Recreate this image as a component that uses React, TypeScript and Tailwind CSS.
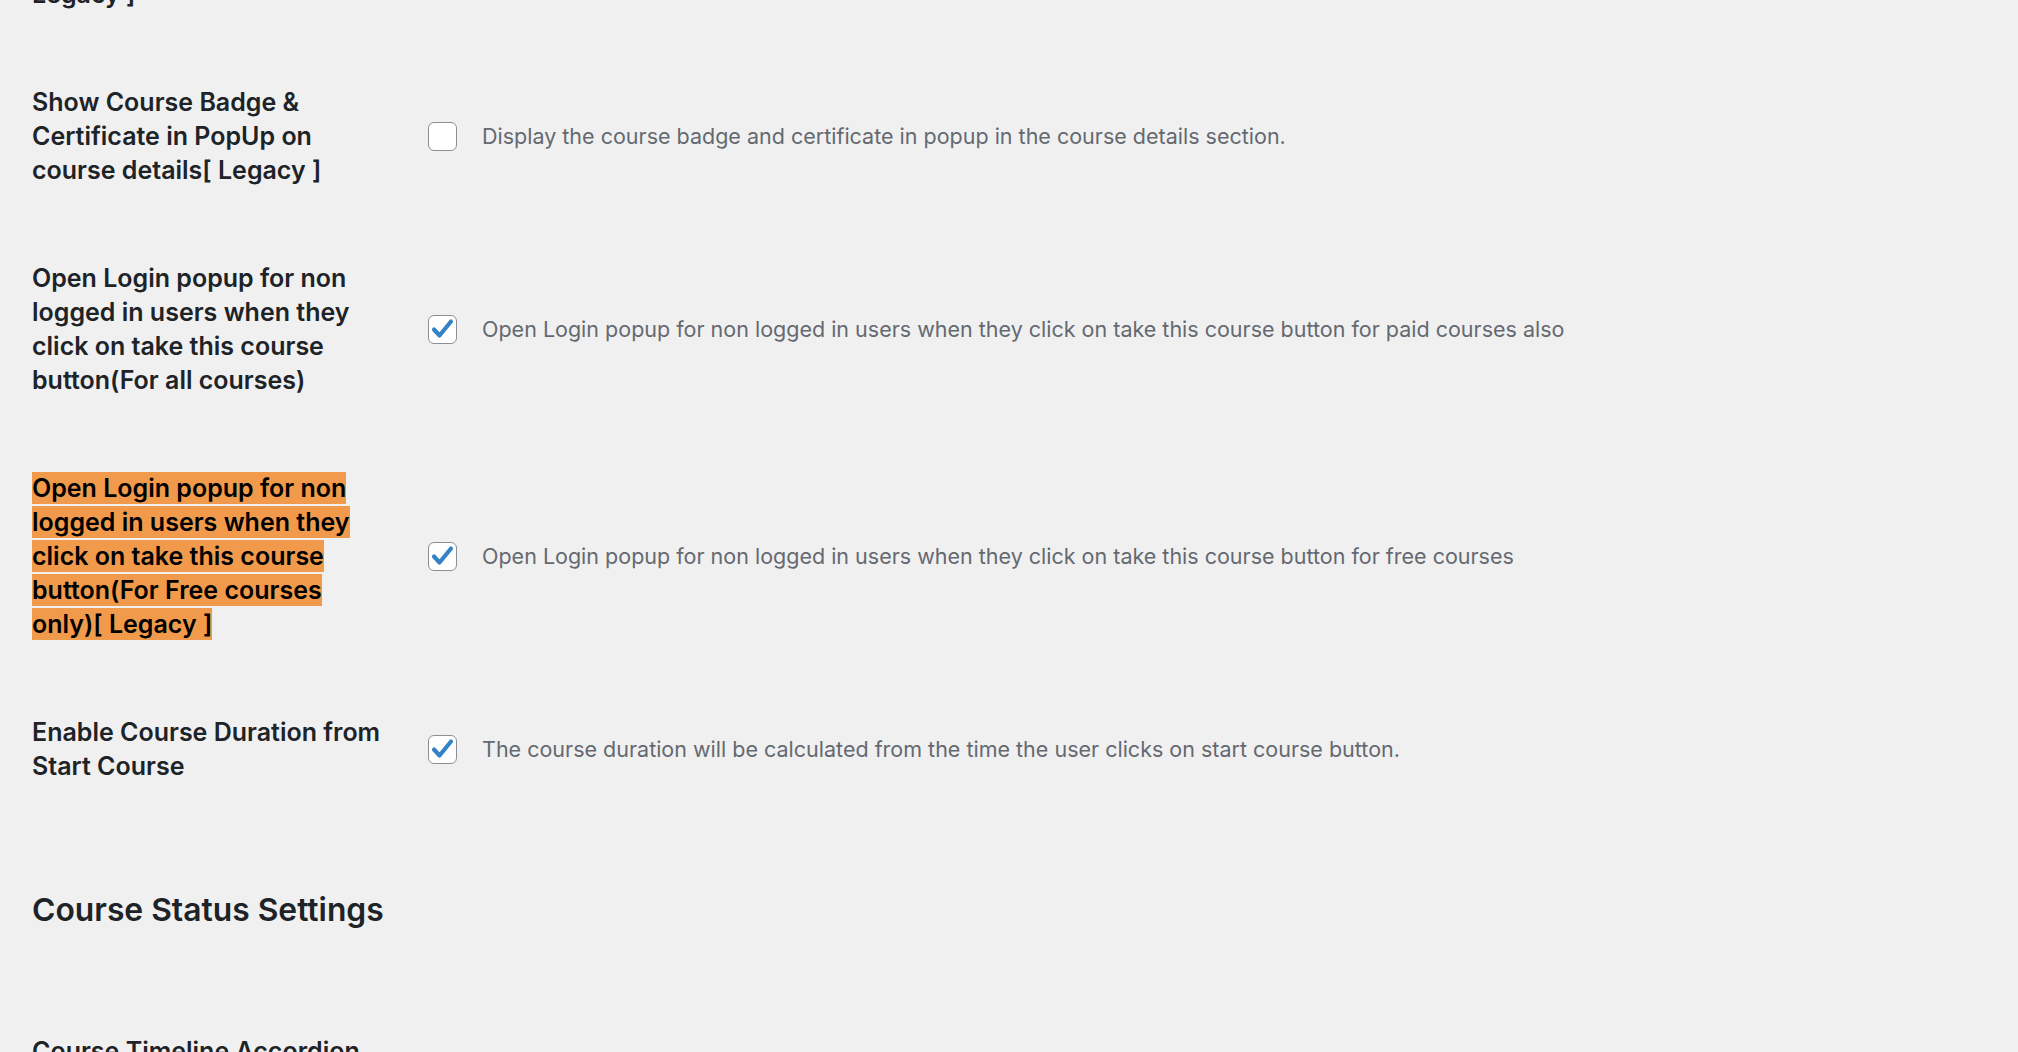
import type { ReactNode } from 'react';

const font = { fontFamily: 'Inter, "Noto Sans", "Liberation Sans", sans-serif' };

function Checkbox({ checked }: { checked?: boolean }) {
  return (
    <span className="flex h-[29px] w-[29px] shrink-0 items-center justify-center rounded-[6px] border border-[#8c8f94] bg-white">
      {checked && (
        <svg width="27" height="27" viewBox="0 0 27 27">
          <path
            d="M5 13.5 L10.5 19.5 L22 5.5"
            fill="none"
            stroke="#3582c4"
            strokeWidth="4.2"
            strokeLinecap="round"
            strokeLinejoin="round"
          />
        </svg>
      )}
    </span>
  );
}

function Row({
  label,
  desc,
  checked,
}: {
  label: ReactNode;
  desc?: string;
  checked?: boolean;
}) {
  return (
    <div className="flex">
      <div className="w-[374px] shrink-0 py-[37px] pr-[19px] text-[25px] leading-[34px] font-semibold text-[#1d2327]">
        {label}
      </div>
      {desc !== undefined && (
        <div className="flex items-center gap-[25px] pl-[22px]">
          <Checkbox checked={checked} />
          <span className="text-[21.5px] text-[#646970]">{desc}</span>
        </div>
      )}
    </div>
  );
}

export default function App() {
  return (
    <div className="h-[1052px] w-full overflow-hidden bg-[#f0f0f1]" style={font}>
      <div className="-mt-[94px] pl-[32px]">
        <Row label={<>Some previous setting [ Legacy ]</>} />

        <Row
          label="Show Course Badge & Certificate in PopUp on course details[ Legacy ]"
          desc="Display the course badge and certificate in popup in the course details section."
        />
        <Row
          label="Open Login popup for non logged in users when they click on take this course button(For all courses)"
          desc="Open Login popup for non logged in users when they click on take this course button for paid courses also"
          checked
        />
        <Row
          label={
            <span className="bg-[#f29a4b] py-[1px] text-black [box-decoration-break:clone]">
              Open Login popup for non logged in users when they click on take this course
              button(For Free courses only)[ Legacy ]
            </span>
          }
          desc="Open Login popup for non logged in users when they click on take this course button for free courses"
          checked
        />
        <Row
          label="Enable Course Duration from Start Course"
          desc="The course duration will be calculated from the time the user clicks on start course button."
          checked
        />

        <h2 className="mt-[68px] text-[31.8px] leading-[43px] font-semibold text-[#1d2327]">
          Course Status Settings
        </h2>

        <div className="mt-[66px]">
          <Row label="Course Timeline Accordion" />
        </div>
      </div>
    </div>
  );
}
